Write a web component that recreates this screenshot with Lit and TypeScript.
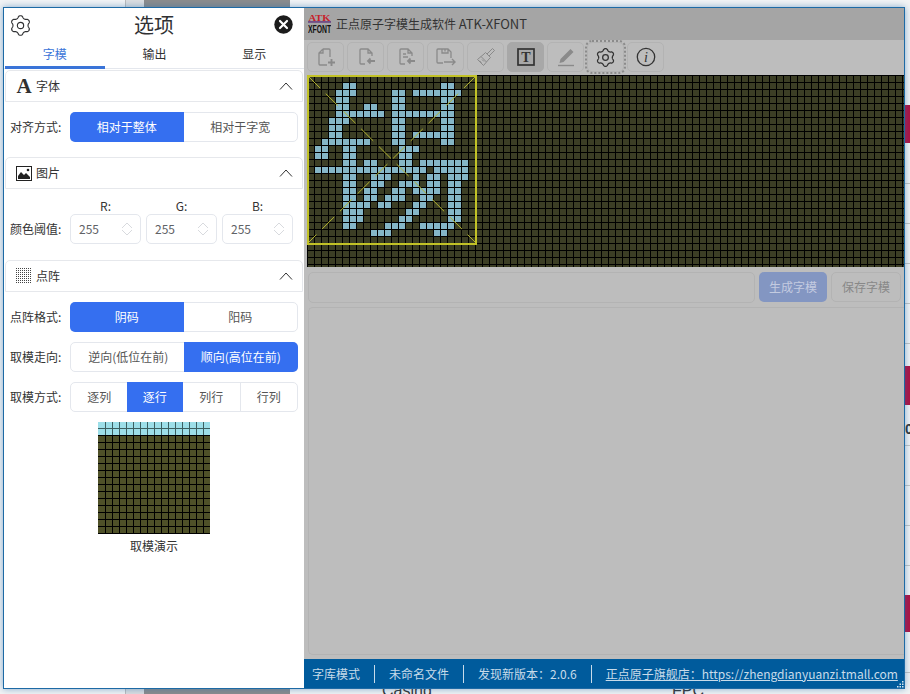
import { LitElement, html, css, svg } from "lit";
import { customElement } from "lit/decorators.js";

const LIT: Record<number, number[]> = {
  1: [5, 6, 19, 20],
  2: [4, 5, 6, 12, 13, 15, 16, 17, 18, 19, 20, 21],
  3: [4, 5, 12, 13, 19, 20],
  4: [4, 5, 8, 9, 12, 13, 19, 20],
  5: [4, 5, 6, 7, 8, 9, 10, 12, 13, 14, 15, 16, 17, 18, 19, 20],
  6: [3, 4, 5, 12, 13, 19, 20],
  7: [3, 4, 12, 13, 19, 20],
  8: [3, 4, 12, 13, 15, 16, 17, 18, 19, 20],
  9: [2, 3, 4, 5, 6, 7, 8, 12, 13, 19, 20],
  10: [1, 2, 5, 6, 13, 14, 15],
  11: [1, 2, 5, 6, 13, 14],
  12: [5, 6, 8, 9, 13, 14, 16, 17, 18, 19, 20, 21, 22],
  13: [1, 2, 3, 4, 5, 6, 7, 8, 9, 10, 11, 12, 13, 14, 15, 16, 18, 19, 20, 21, 22],
  14: [5, 6, 9, 10, 11, 15, 17, 18, 20, 21, 22],
  15: [5, 6, 9, 10, 13, 14, 15, 17, 18, 20, 21],
  16: [5, 6, 8, 9, 12, 13, 15, 16, 17, 18, 20, 21],
  17: [5, 6, 8, 9, 11, 12, 13, 16, 17, 20, 21],
  18: [5, 6, 7, 8, 10, 11, 15, 16, 20, 21],
  19: [5, 6, 7, 14, 15, 20, 21],
  20: [5, 6, 7, 13, 14, 20, 21],
  21: [5, 6, 11, 12, 13, 16, 17, 18, 19, 20],
  22: [9, 10, 11, 18, 19],
};

function gearPath(c: number, R: number, a: number): string {
  const pts: string[] = [];
  for (let i = 0; i < 180; i++) {
    const t = (i / 180) * Math.PI * 2;
    const w = Math.cos(6 * (t - Math.PI / 2));
    const r = R - a + a * Math.sign(w) * Math.pow(Math.abs(w), 0.7);
    pts.push(`${(c + r * Math.cos(t)).toFixed(2)} ${(c + r * Math.sin(t)).toFixed(2)}`);
  }
  return "M" + pts.join("L") + "Z";
}

const gear = (size: number, sw: number) => html`<svg width=${size} height=${size} viewBox="0 0 24 24" fill="none" stroke="currentColor" stroke-width=${sw} stroke-linejoin="round">
  <path d=${gearPath(12, 11.2, 1.3)}></path><circle cx="12" cy="12" r="3.6"></circle></svg>`;

const chevron = html`<svg class="chev" width="14" height="8" viewBox="0 0 14 8" fill="none" stroke="#333" stroke-width="1"><path d="M1 7.5 7 1l6 6.5"></path></svg>`;

const tbIcons = [
  html`<svg width="20" height="20" viewBox="0 0 20 20" fill="none" stroke="currentColor" stroke-width="1.3"><path d="M7 2h6a1 1 0 0 1 1 1v7M7 2 3 6v11a1 1 0 0 0 1 1h7M7 2v4H3"></path><path stroke-width="1.9" d="M15.500 12v7M12 15.500h7"></path></svg>`,
  html`<svg width="20" height="20" viewBox="0 0 20 20" fill="none" stroke="currentColor" stroke-width="1.3"><path d="M16 9V6l-4-4H5a1 1 0 0 0-1 1v13a1 1 0 0 0 1 1h4M12 2v4h4"></path><path stroke-width="1.8" d="M19 14h-7M14.500 11.500 12 14l2.500 2.500"></path></svg>`,
  html`<svg width="20" height="20" viewBox="0 0 20 20" fill="none" stroke="currentColor" stroke-width="1.3"><path d="M16 9V6l-4-4H5a1 1 0 0 0-1 1v13a1 1 0 0 0 1 1h4M12 2v4h4M7 7h3M7 10h5"></path><path stroke-width="1.8" d="M19 14h-7M14.500 11.500 12 14l2.500 2.500"></path></svg>`,
  html`<svg width="22" height="20" viewBox="0 0 22 20" fill="none" stroke="currentColor" stroke-width="1.3"><path d="M3 2h10l3 3v6M3 2a1 1 0 0 0-1 1v12a1 1 0 0 0 1 1h5M7 2v4h6V2M10 2.500v2"></path><path stroke-width="1.4" d="M9 15h11M17 12l3 3-3 3"></path></svg>`,
  html`<svg width="20" height="20" viewBox="0 0 20 20" fill="none" stroke="currentColor" stroke-width="1"><path d="m16.500 1.500 2 2-5.500 5.500-2-2zM9.500 5.500l5 5-1.500 1.500-5.500 6.500L1.500 12.500 8 7zM5 9.500l5.500 5.500M3.500 14l2 1.500M6 12.500l2 2"></path></svg>`,
  html`<svg width="18" height="18" viewBox="0 0 18 18"><rect x="1" y="1" width="16" height="16" fill="none" stroke="currentColor" stroke-width="1.700"></rect><text x="9" y="14" text-anchor="middle" font-family="Liberation Serif" font-weight="700" font-size="14" fill="currentColor">T</text></svg>`,
  html`<svg width="20" height="20" viewBox="0 0 20 20" fill="currentColor"><path d="m14.500 2 3 3L7.500 15l-4 1 1-4z"></path><path d="M2 17.800h16v1.400H2z"></path></svg>`,
  gear(19, 1.6),
  html`<svg width="20" height="20" viewBox="0 0 20 20"><circle cx="10" cy="10" r="8.700" fill="none" stroke="currentColor" stroke-width="1.300"></circle><text x="10" y="15" text-anchor="middle" font-family="Liberation Serif" font-style="italic" font-size="14" fill="currentColor">i</text></svg>`,
];

@customElement("app-root")
export class AppRoot extends LitElement {
  static styles = css`
    :host { display: block; width: 910px; height: 694px; position: relative; overflow: hidden; background: #f3f4f5;
      font-family: "Noto Sans CJK SC", "Noto Sans", sans-serif; font-size: 12px; color: #333; }
    .bg { position: absolute; }
    .bg.strip1 { left: 125px; width: 19px; top: 0; height: 694px; background: #dcdee0; border-left: 1px solid #bbb; box-sizing: border-box; }
    .bg.strip2 { left: 144px; width: 146px; top: 0; height: 694px; background: #8c8c8c; }
    .bg.red { left: 905px; width: 5px; background: #b30f3f; }
    .bg.line { left: 905px; width: 5px; height: 1px; background: #c4c4c4; }
    .bg.word { font-family: "Liberation Sans", sans-serif; font-size: 16px; line-height: 20px; color: #333; }
    .bg.zero { left: 905px; top: 419px; font-family: "Liberation Sans", sans-serif; font-size: 14px; line-height: 20px; font-weight: 700; color: #333; }
    .window { position: absolute; left: 3px; top: 7px; width: 902px; height: 682px; box-sizing: border-box;
      border: 1px solid #1d6aa5; box-shadow: 0 0 7px rgba(40, 110, 170, 0.55); display: flex; background: #bdbdbd; }

    .drawer { width: 300px; flex: none; background: #fff; display: flex; flex-direction: column; }
    .dhead { height: 36px; box-sizing: border-box; display: grid; grid-template-columns: 1fr auto 1fr; align-items: center; padding: 0 6px 2px 6px; color: #333; }
    .dhead .title { font-size: 20px; line-height: 28px; color: #303133; }
    .dhead .close { justify-self: end; display: flex; margin: 0 5px 2px 0; }
    .dhead .g { display: flex; color: #303133; }
    .tabs { height: 24px; display: flex; padding-left: 1px; border-bottom: 1px solid #e4e7ed; box-sizing: content-box; }
    .tab { flex: 1; text-align: center; line-height: 20px; position: relative; color: #333; }
    .tab.on { color: #3a74d8; border-bottom: 3px solid #3a74d8; margin-bottom: -1px; }
    .sec-head { margin: 1px 1px 0; border: 1px solid #e6e8ec; border-radius: 5px 5px 0 0; display: flex; align-items: center; padding-left: 10px; padding-right: 9px; gap: 4px; box-sizing: content-box; height: 30px; }
    .sec-head .ic { width: 16px; height: 18px; display: flex; align-items: center; justify-content: center; flex: none; }
    .sec-head .name { flex: 1; line-height: 18px; color: #333; }
    .chev { display: block; }
    .A { font-family: "Liberation Serif", serif; font-weight: 700; font-size: 21px; line-height: 18px; color: #303030; }
    .body { padding: 10px 5px 14px 6px; display: flex; flex-direction: column; gap: 10px; }
    .row { display: flex; align-items: center; height: 30px; }
    .lab { width: 60px; flex: none; color: #333; line-height: 18px; white-space: nowrap; }
    .seg { width: 228px; height: 30px; display: flex; box-sizing: border-box; border: 1px solid #e4e7ed; border-radius: 5px; color: #555; }
    .seg div { flex: 1; display: flex; align-items: center; justify-content: center; line-height: 18px; white-space: nowrap; }
    .seg div + div { border-left: 1px solid #e4e7ed; }
    .seg .on { background: #356ff0; color: #fff; margin: -1px 0 -1px -1px; border-left: 0; }
    .seg .on + div { border-left: 0; }
    .seg .on:first-child { border-radius: 5px 0 0 5px; }
    .seg .on:last-child { margin-left: -2px; margin-right: -1px; border-radius: 0 5px 5px 0; }
    .rgbbody { padding: 9px 5px 15px 6px; display: grid; grid-template-columns: 55px 71px 71px 71px; column-gap: 5px; row-gap: 0; align-items: center; }
    .rgbbody .lab { width: auto; }
    .rgbbody .h { text-align: center; line-height: 16px; height: 16px; color: #333; }
    .num { height: 30px; box-sizing: border-box; border: 1px solid #e4e7ed; border-radius: 5px; display: flex; align-items: center; justify-content: space-between; padding: 0 7px 0 8px; color: #606266; line-height: 16px; }
    .demo { display: flex; flex-direction: column; align-items: center; gap: 3px; margin-top: -4px; }
    .demo svg { display: block; }
    .demo .cap { line-height: 18px; margin-top: 0; color: #333; }

    .main { flex: 1; min-width: 0; display: flex; flex-direction: column; }
    .tbar { height: 32px; flex: none; box-sizing: border-box; padding: 0 0 1px 4px; background: #a5a5a5; display: flex; align-items: center; gap: 5px; color: #333; white-space: nowrap; }
    .tbar svg { display: block; }
    .tbar .lat { font-size: 13px; }
    .tools { height: 35px; flex: none; display: flex; gap: 3px; padding: 2px 0 0 3px; box-sizing: border-box; }
    .tool { width: 37px; height: 30px; box-sizing: border-box; border: 1px solid #b3b3b3; border-radius: 5px; display: flex; align-items: center; justify-content: center; color: #8a8a8a; }
    .tool.on { background: #a8a8a8; border-color: #a8a8a8; color: #333; }
    .tool.dark { color: #333; }
    .tool.focus { outline: 2px dotted #8b8b8b; outline-offset: 0; }
    .cv { height: 192px; flex: none; margin-left: 3px; }
    .cv svg { display: block; }
    .ctl { height: 40px; flex: none; display: flex; gap: 4px; padding: 5px 3px 5px 4px; box-sizing: border-box; }
    .inp { flex: 1; height: 31px; box-sizing: border-box; border: 1px solid #b3b3b3; border-radius: 5px; }
    .btn { height: 30px; box-sizing: border-box; border-radius: 5px; display: flex; align-items: center; justify-content: center; line-height: 18px; }
    .btn.p { width: 68px; background: #8396c2; color: #c3cbe0; }
    .btn.s { width: 70px; border: 1px solid #b3b3b3; color: #888; }
    .area { flex: 1; margin: 0 0 4px 4px; border: 1px solid #b3b3b3; border-right: 0; border-radius: 5px 0 0 5px; }
    .status { height: 29px; flex: none; background: #005b9c; color: #c8dbea; display: flex; align-items: center; padding-left: 8px; position: relative; white-space: nowrap; }
    .status span { padding: 0 14px; line-height: 18px; border-left: 1px solid #c8dbea; }
    .status span:first-child { padding-left: 0; border-left: 0; }
    .status .link { text-decoration: underline; padding-right: 0; }
    .grip { position: absolute; right: 0; bottom: 0; display: block; }
  `;

  private section(icon: unknown, name: string) {
    return html`<div class="sec-head"><div class="ic">${icon}</div><div class="name">${name}</div>${chevron}</div>`;
  }

  private canvas() {
    const rects = [];
    for (const r of Object.keys(LIT)) {
      for (const c of LIT[+r]) {
        rects.push(svg`<rect x=${1 + c * 7} y=${1 + +r * 7} width="6" height="6" fill="#85b6c7"></rect>`);
      }
    }
    return html`<svg width="597" height="192" viewBox="0 0 597 192">
      <defs><pattern id="g" width="7" height="7" patternUnits="userSpaceOnUse">
        <rect width="7" height="7" fill="#000"></rect><rect x="1" y="1" width="6" height="6" fill="#3c3e25"></rect>
      </pattern></defs>
      <rect width="597" height="192" fill="url(#g)" shape-rendering="crispEdges"></rect>
      ${rects}
      <path d="M1 1 169 168M169 1 1 168" stroke="#b4b42e" stroke-width="1" stroke-dasharray="17 8" fill="none"></path>
      <rect x="1" y="1" width="168" height="168" fill="none" stroke="#c2c226" stroke-width="2"></rect>
    </svg>`;
  }

  private demo() {
    const cells = [];
    for (let y = 0; y < 16; y++) {
      for (let x = 0; x < 16; x++) {
        cells.push(svg`<rect x=${x * 7 + (x ? 1 : 0)} y=${y * 7} width=${x ? 6 : 7} height="6" fill=${y < 2 ? "#9ddfe9" : "#4f5128"}></rect>`);
      }
    }
    return html`<svg width="112" height="112" viewBox="0 0 112 112" shape-rendering="crispEdges">
      <rect width="112" height="14" fill="#3c5f60"></rect><rect y="13" width="112" height="99" fill="#000"></rect>${cells}
    </svg>`;
  }

  render() {
    const reds = [[105, 38], [366, 39], [595, 37]];
    const lines = [183, 223, 263, 303, 343, 445, 485, 525, 565, 672];
    return html`
      <div class="bg strip1"></div><div class="bg strip2"></div>
      ${reds.map(([t, h]) => html`<div class="bg red" style="top:${t}px;height:${h}px"></div>`)}
      ${lines.map((t) => html`<div class="bg line" style="top:${t}px"></div>`)}
      <div class="bg word" style="left:382px;top:681px">Casing</div>
      <div class="bg word" style="left:672px;top:681px">FPC</div>
      <div class="bg zero">0</div>
      <div class="window">
        <div class="drawer">
          <div class="dhead">
            <div class="g">${gear(21, 1.3)}</div>
            <div class="title">选项</div>
            <div class="close"><svg width="19" height="19" viewBox="0 0 19 19"><circle cx="9.500" cy="9.500" r="9.200" fill="#1c1c1c"></circle><path d="m6 6 7 7m0-7-7 7" stroke="#fff" stroke-width="2.200" stroke-linecap="round"></path></svg></div>
          </div>
          <div class="tabs"><div class="tab on">字模</div><div class="tab">输出</div><div class="tab">显示</div></div>
          ${this.section(html`<span class="A">A</span>`, "字体")}
          <div class="body">
            <div class="row"><div class="lab">对齐方式:</div><div class="seg"><div class="on">相对于整体</div><div>相对于字宽</div></div></div>
          </div>
          ${this.section(html`<svg width="16" height="15" viewBox="0 0 16 15"><rect x="0.500" y="0.500" width="15" height="14" fill="#fff" stroke="#222"></rect><path d="M2 13V10l3-4 3 3 2-2 4 4v2z" fill="#222"></path><circle cx="12" cy="4" r="1.300" fill="#222"></circle></svg>`, "图片")}
          <div class="rgbbody">
            <div></div><div class="h">R:</div><div class="h">G:</div><div class="h">B:</div>
            <div class="lab">颜色阈值:</div>
            ${["", "", ""].map(() => html`<div class="num"><span>255</span><svg width="12" height="16" viewBox="0 0 12 16" fill="none" stroke="#d8dade" stroke-width="1"><path d="m1 7 5-5 5 5M1 9l5 5 5-5"></path></svg></div>`)}
          </div>
          ${this.section(html`<svg width="16" height="16" viewBox="0 0 16 16"><defs><pattern id="dm" width="2" height="2" patternUnits="userSpaceOnUse"><rect width="1" height="1" fill="#444"></rect></pattern></defs><rect width="16" height="16" fill="url(#dm)"></rect></svg>`, "点阵")}
          <div class="body">
            <div class="row"><div class="lab">点阵格式:</div><div class="seg"><div class="on">阴码</div><div>阳码</div></div></div>
            <div class="row"><div class="lab">取模走向:</div><div class="seg"><div>逆向(低位在前)</div><div class="on">顺向(高位在前)</div></div></div>
            <div class="row"><div class="lab">取模方式:</div><div class="seg"><div>逐列</div><div class="on">逐行</div><div>列行</div><div>行列</div></div></div>
          </div>
          <div class="demo">${this.demo()}<div class="cap">取模演示</div></div>
        </div>
        <div class="main">
          <div class="tbar">
            <svg width="23" height="21" viewBox="0 0 23 21">
              <text x="11.500" y="7.500" text-anchor="middle" font-family="Liberation Serif" font-weight="700" font-size="9" textLength="22" lengthAdjust="spacingAndGlyphs" fill="#c8202a">ATK</text>
              <rect y="8.300" width="23" height="1.300" fill="#5a2a7a"></rect>
              <text transform="translate(11.500 20) scale(0.72 1.15)" text-anchor="middle" font-family="Liberation Sans" font-weight="700" font-size="9.500" fill="#111">XFONT</text>
            </svg>
            <span>正点原子字模生成软件 <span class="lat">ATK-XFONT</span></span>
          </div>
          <div class="tools">
            ${tbIcons.map((ic, i) => html`<div class="tool ${i === 5 ? "on" : ""} ${i >= 7 ? "dark" : ""} ${i === 7 ? "focus" : ""}">${ic}</div>`)}
          </div>
          <div class="cv">${this.canvas()}</div>
          <div class="ctl"><div class="inp"></div><div class="btn p">生成字模</div><div class="btn s">保存字模</div></div>
          <div class="area"></div>
          <div class="status">
            <span>字库模式</span><span>未命名文件</span><span>发现新版本：2.0.6</span><span class="link">正点原子旗舰店：https://zhengdianyuanzi.tmall.com</span>
            <svg class="grip" width="9" height="7" viewBox="0 0 9 7" fill="#d8e6f0"><rect x="7" y="0" width="1.500" height="1.500"></rect><rect x="4.500" y="2.500" width="1.500" height="1.500"></rect><rect x="7" y="2.500" width="1.500" height="1.500"></rect><rect x="2" y="5" width="1.500" height="1.500"></rect><rect x="4.500" y="5" width="1.500" height="1.500"></rect><rect x="7" y="5" width="1.500" height="1.500"></rect></svg>
          </div>
        </div>
      </div>
    `;
  }
}
